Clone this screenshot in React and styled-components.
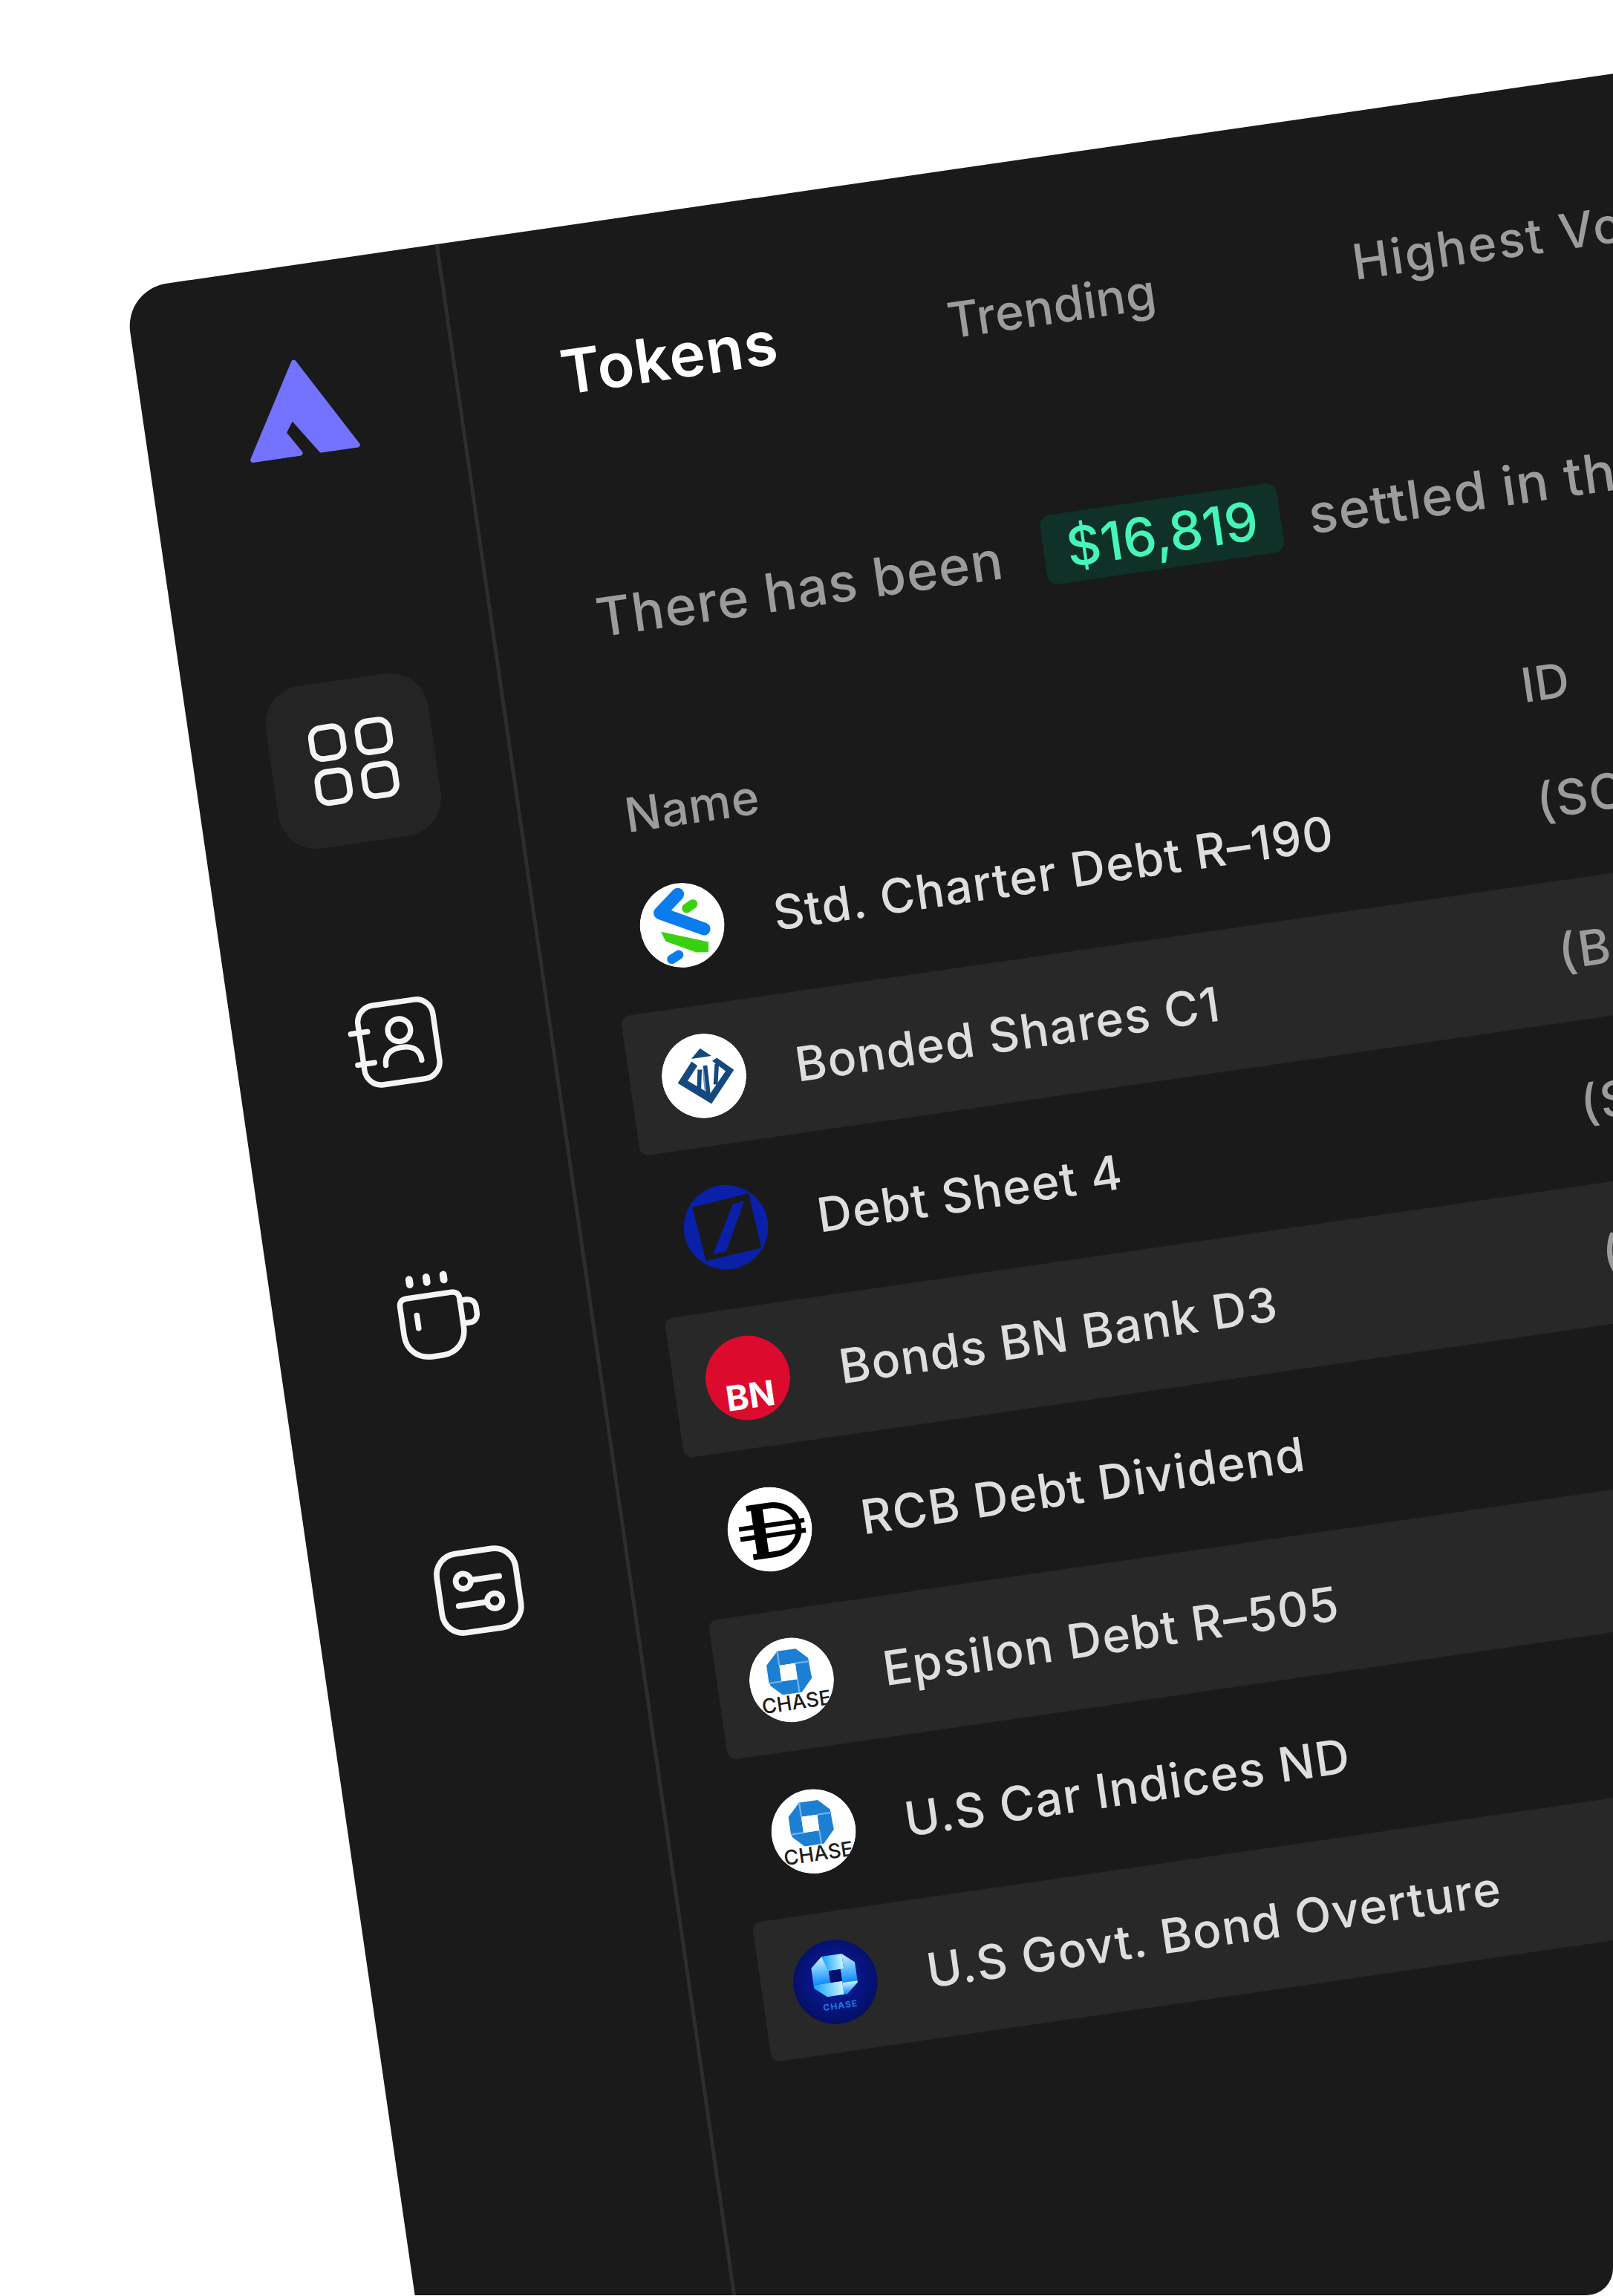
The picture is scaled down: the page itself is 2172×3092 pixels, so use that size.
import React from "react";
import styled, { createGlobalStyle } from "styled-components";

const Global = createGlobalStyle`
  html, body { margin: 0; padding: 0; background: #fff; }
  * { box-sizing: border-box; }
`;

const Stage = styled.div`
  width: 2172px;
  height: 3091px;
  overflow: hidden;
  background: #fff;
  border-radius: 0 0 36px 0;
  padding: 389.8px 0 0 166.5px;
`;

const Panel = styled.div`
  width: 2800px;
  height: 3600px;
  background: #1a1a1a;
  border-radius: 58px 0 0 0;
  display: flex;
  transform-origin: 0 0;
  transform: rotate(-8.25deg);
  font-family: Inter, "Liberation Sans", sans-serif;
`;

const Sidebar = styled.aside`
  flex: 0 0 428px;
  border-right: 5px solid #2d2d2d;
  padding: 125px 0 0 0;
  display: flex;
  flex-direction: column;
  align-items: center;
`;

const LogoMark = styled.svg`
  width: 150px;
  height: 131px;
  display: block;
  margin-left: -3px;
`;

const Nav = styled.nav`
  margin-top: 306px;
  display: flex;
  flex-direction: column;
  gap: 157px;
  align-items: center;
`;

const NavItem = styled.div`
  width: ${(p) => (p.$active ? "221px" : "216px")};
  height: ${(p) => (p.$active ? "221px" : "216px")};
  margin-bottom: ${(p) => (p.$active ? "8px" : "0")};
  margin-left: ${(p) => p.$shift}px;
  border-radius: 52px;
  background: ${(p) => (p.$active ? "#242424" : "transparent")};
  display: flex;
  align-items: center;
  justify-content: center;
`;

const Icon = styled.svg`
  width: ${(p) => p.$size}px;
  height: ${(p) => p.$size}px;
  fill: none;
  stroke: #f4f4f4;
  stroke-width: 1.3;
  stroke-linecap: round;
  stroke-linejoin: round;
`;

const Main = styled.main`
  flex: 1;
  padding: 146px 0 0 138px;
  display: flex;
  flex-direction: column;
`;

const Tabs = styled.div`
  display: flex;
  align-items: baseline;
  height: 100px;
`;

const Tab = styled.div`
  font-size: ${(p) => (p.$active ? "82px" : "66px")};
  font-weight: ${(p) => (p.$active ? 600 : 500)};
  color: ${(p) => (p.$active ? "#ffffff" : "#9c9c9c")};
  letter-spacing: ${(p) => p.$ls}px;
  margin-right: ${(p) => p.$gap}px;
  white-space: nowrap;
`;

const Sentence = styled.div`
  margin-top: 232.5px;
  display: flex;
  align-items: center;
  gap: 56px;
  height: 94px;
  font-size: 72px;
  font-weight: 500;
  color: #9c9c9c;
  white-space: nowrap;
  letter-spacing: 1.3px;
`;

const SentenceText = styled.span`
  padding-top: 6px;
`;

const Badge = styled.span`
  width: 322px;
  height: 94px;
  margin-right: -18px;
  border-radius: 14px;
  background: #0f3128;
  color: #45f5b9;
  display: flex;
  align-items: center;
  justify-content: center;
  letter-spacing: 0;
`;

const Header = styled.div`
  margin-top: 185px;
  height: 80px;
  display: grid;
  grid-template-columns: 1219.7px 1fr;
  align-items: center;
  font-size: 64px;
  font-weight: 500;
  letter-spacing: 0.8px;
  color: #9c9c9c;
`;

const Rows = styled.div`
  margin-top: 22px;
  margin-left: -45px;
  display: flex;
  flex-direction: column;
  gap: 15.5px;
`;

const Row = styled.div`
  height: 190px;
  border-radius: 12px 0 0 12px;
  background: ${(p) => (p.$alt ? "#282828" : "transparent")};
  padding-left: 43px;
  display: grid;
  grid-template-columns: 114px 1105.7px 1fr;
  align-items: center;
`;

const Avatar = styled.svg`
  width: 114px;
  height: 114px;
  display: block;
  border-radius: 50%;
`;

const Name = styled.div`
  margin-left: 67px;
  padding-top: 4px;
  font-size: 64px;
  font-weight: 500;
  letter-spacing: 1.4px;
  color: #dedede;
  white-space: nowrap;
`;

const Ticker = styled.div`
  font-size: 66px;
  font-weight: 500;
  letter-spacing: 2px;
  color: #9c9c9c;
  white-space: nowrap;
`;

const ChaseMark = () => (
  <g transform="translate(-3 1)">
    <polygon points="39,13 63,13 76,26 76,30 60,30 41,30 41,13" fill="#1c7fd2" />
    <polygon points="60,30 76,28 77,50 63,65 60,65" fill="#1c7fd2" />
    <polygon points="60,49 60,65 40,65 27,52 27,49" fill="#1c7fd2" />
    <polygon points="26,28 41,13 41,49 26,49" fill="#1c7fd2" />
    <rect x="41" y="30" width="19" height="19" fill="#fff" />
    <line x1="41" y1="30" x2="41" y2="13" stroke="#6fb3e8" strokeWidth="2" />
    <line x1="60" y1="30" x2="77" y2="30" stroke="#6fb3e8" strokeWidth="2" />
    <line x1="60" y1="49" x2="60" y2="65" stroke="#6fb3e8" strokeWidth="2" />
    <line x1="41" y1="49" x2="26" y2="49" stroke="#6fb3e8" strokeWidth="2" />
  </g>
);

const logos = {
  sc: (
    <>
      <circle cx="50" cy="50" r="50" fill="#fff" />
      <path d="M50 13 L26 32 L75 58" fill="none" stroke="#0b7ceb" strokeWidth="15" strokeLinecap="round" strokeLinejoin="round" />
      <path d="M58 31 L66 27" fill="none" stroke="#38d10f" strokeWidth="11" strokeLinecap="round" />
      <polygon points="24,54 78,74 76,86 62,84 28,66" fill="#38d10f" />
      <path d="M32 88 L41 84" fill="none" stroke="#0b7ceb" strokeWidth="11" strokeLinecap="round" />
    </>
  ),
  diamond: (
    <>
      <circle cx="50" cy="50" r="50" fill="#fff" />
      <polygon points="50,17 62,28 38,28" fill="#14497f" />
      <path d="M38 31 L18 54 L54 84 L86 48 L68 31 L62 34 L76 48 L54 72 L30 53 L44 37 Z" fill="#14497f" />
      <path d="M42 64 L46 42 M52 72 L53 38 M62 62 L67 38" stroke="#14497f" strokeWidth="5" fill="none" />
      <path d="M49 68 L50 42" stroke="#7f9dbd" strokeWidth="2" fill="none" />
    </>
  ),
  db: (
    <>
      <circle cx="50" cy="50" r="50" fill="#0a20a8" />
      <polygon points="14,21 82,14 88,80 21,86" fill="#1a1a1a" />
      <polygon points="62,24 76,22 46,78 30,80" fill="#0a20a8" />
    </>
  ),
  bn: (
    <>
      <circle cx="50" cy="50" r="50" fill="#dc0a2d" />
      <text x="50" y="86" textAnchor="middle" fill="#fff" fontFamily="Inter, sans-serif" fontWeight="700" fontSize="41">BN</text>
    </>
  ),
  dai: (
    <>
      <circle cx="50" cy="50" r="50" fill="#fff" />
      <path d="M26 22 H52 C72 22 84 35 84 51 C84 67 72 80 52 80 H26" fill="none" stroke="#000" strokeWidth="7" />
      <rect x="31" y="22" width="14" height="58" fill="#000" />
      <path d="M14 45 H92 M14 57 H92" stroke="#000" strokeWidth="5.5" />
      <path d="M45 51 H80" stroke="#fff" strokeWidth="2" />
    </>
  ),
  chase: (
    <>
      <circle cx="50" cy="50" r="50" fill="#fff" />
      <ChaseMark />
      <text x="52" y="85" textAnchor="middle" fill="#1c1c1c" fontFamily="Inter, sans-serif" fontWeight="500" fontSize="24">CHASE</text>
    </>
  ),
  chaseBlue: (
    <>
      <defs>
        <radialGradient id="navy" cx="50%" cy="45%" r="60%">
          <stop offset="0%" stopColor="#0a1fb0" />
          <stop offset="100%" stopColor="#040d5a" />
        </radialGradient>
        <linearGradient id="glowA" x1="0" y1="0" x2="1" y2="0">
          <stop offset="0%" stopColor="#12a5ff" />
          <stop offset="100%" stopColor="#c9f4ff" />
        </linearGradient>
        <linearGradient id="glowB" x1="0" y1="0" x2="0" y2="1">
          <stop offset="0%" stopColor="#c9f4ff" />
          <stop offset="100%" stopColor="#0f8dff" />
        </linearGradient>
      </defs>
      <circle cx="50" cy="50" r="50" fill="url(#navy)" />
      <polygon points="38,18 62,18 62,36 44,36" fill="url(#glowA)" />
      <polygon points="62,18 76,30 76,52 58,52 58,36 62,36" fill="url(#glowB)" />
      <polygon points="24,30 38,18 44,36 44,50 24,50" fill="url(#glowB)" />
      <polygon points="24,50 58,50 58,66 38,66 24,54" fill="url(#glowA)" />
      <polygon points="58,52 76,52 76,54 62,66 58,66" fill="url(#glowB)" />
      <rect x="44" y="36" width="14" height="14" fill="#05106a" />
      <text x="52" y="82" textAnchor="middle" fill="#1b78e0" fontFamily="Inter, sans-serif" fontWeight="700" fontSize="10.5" letterSpacing="1">CHASE</text>
    </>
  ),
};

const rows = [
  ["sc", "Std. Charter Debt R–190", "(SCD)"],
  ["diamond", "Bonded Shares C1", "(BSC)"],
  ["db", "Debt Sheet 4", "(SDT)"],
  ["bn", "Bonds BN Bank D3", "(BND)"],
  ["dai", "RCB Debt Dividend", "(RCB)"],
  ["chase", "Epsilon Debt R–505", "(EPD)"],
  ["chase", "U.S Car Indices ND", "(USC)"],
  ["chaseBlue", "U.S Govt. Bond Overture", "(USG)"],
];

export default function App() {
  return (
    <Stage>
      <Global />
      <Panel>
        <Sidebar>
          <LogoMark viewBox="0 0 150 131">
            <path
              d="M77 5 L146 127 L97 127 L64 77 L50 97 L68 127 L4 127 Z"
              fill="#7373ff"
              stroke="#7373ff"
              strokeWidth="7"
              strokeLinejoin="round"
            />
          </LogoMark>
          <Nav>
            <NavItem $active $shift={6}>
              <Icon $size={142} viewBox="0 0 24 24">
                <rect x="3.1" y="3.4" width="7.1" height="7.1" rx="2.3" />
                <rect x="13.8" y="3.4" width="7.1" height="7.1" rx="2.3" />
                <rect x="3.1" y="13.5" width="7.1" height="7.1" rx="2.3" />
                <rect x="13.8" y="13.5" width="7.1" height="7.1" rx="2.3" />
              </Icon>
            </NavItem>
            <NavItem $shift={6}>
              <Icon $size={136} viewBox="0 0 24 24">
                <rect x="4" y="2.5" width="18" height="19" rx="4" />
                <path d="M2 8.5h4M2.6 16h4" />
                <circle cx="13.5" cy="9.2" r="2.7" />
                <path d="M9.2 17c0-2.7 2-3.7 4.3-3.7s4.3 1 4.3 3.7" />
              </Icon>
            </NavItem>
            <NavItem $shift={11}>
              <Icon $size={139} viewBox="0 0 24 24">
                <path d="M7 2.5v1.2M11 2.5v1.2M15 2.5v1.2" strokeWidth="1.7" />
                <path d="M4 8.5c0-1 .6-1.7 1.7-1.7h10.6c1.1 0 1.7.7 1.7 1.7v6.7c0 3.4-2.4 5.8-5.8 5.8H9.8C6.4 21 4 18.6 4 15.2z" />
                <path d="M18 9h1.5c1.2 0 2 .8 2 2v1.4c0 1.2-.8 2-2 2H18" />
                <path d="M7.6 11v3" />
              </Icon>
            </NavItem>
            <NavItem $shift={20}>
              <Icon $size={143} viewBox="0 0 24 24">
                <rect x="3" y="3" width="18" height="18" rx="4.8" />
                <circle cx="8.8" cy="9.4" r="1.7" />
                <path d="M10.6 9.4h6.4" />
                <circle cx="15.2" cy="14.8" r="1.7" />
                <path d="M7 14.8h6.4" />
              </Icon>
            </NavItem>
          </Nav>
        </Sidebar>
        <Main>
          <Tabs>
            <Tab $active $gap={230} $ls={1.5}>Tokens</Tab>
            <Tab $gap={268} $ls={0.4}>Trending</Tab>
            <Tab $gap={200} $ls={2.5}>Highest Volume</Tab>
          </Tabs>
          <Sentence>
            <SentenceText>There has been</SentenceText>
            <Badge>$16,819</Badge>
            <SentenceText>settled in the last 24 hours</SentenceText>
          </Sentence>
          <Header>
            <span>Name</span>
            <span>ID</span>
          </Header>
          <Rows>
            {rows.map(([logo, name, id], i) => (
              <Row key={name} $alt={i % 2 === 1}>
                <Avatar viewBox="0 0 100 100">{logos[logo]}</Avatar>
                <Name>{name}</Name>
                <Ticker>{id}</Ticker>
              </Row>
            ))}
          </Rows>
        </Main>
      </Panel>
    </Stage>
  );
}
